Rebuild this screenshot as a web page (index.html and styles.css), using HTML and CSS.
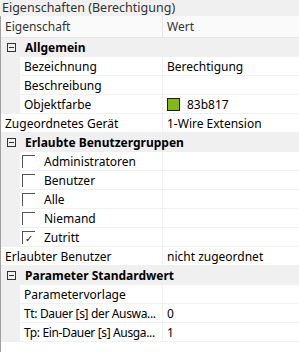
FILE: index.html
```html
<!DOCTYPE html>
<html lang="de">
<head>
    <meta charset="UTF-8">
    <title>Eigenschaften</title>
    <link rel="stylesheet" href="styles.css">
</head>
<body>

    <div class="panel">
        <div class="title">Eigenschaften (Berechtigung)</div>
        <div class="grid">
            <div class="head">
                <div class="name">Eigenschaft</div>
                <div class="value">Wert</div>
            </div>

            <div class="row category">
                <span class="toggle"></span>
                <span class="label">Allgemein</span>
            </div>
            <div class="row child">
                <div class="name">Bezeichnung</div>
                <div class="value">Berechtigung</div>
            </div>
            <div class="row child">
                <div class="name">Beschreibung</div>
                <div class="value"></div>
            </div>
            <div class="row child">
                <div class="name">Objektfarbe</div>
                <div class="value"><span class="swatch"></span>83b817</div>
            </div>
            <div class="row top">
                <div class="name">Zugeordnetes Gerät</div>
                <div class="value">1-Wire Extension</div>
            </div>

            <div class="row category">
                <span class="toggle"></span>
                <span class="label">Erlaubte Benutzergruppen</span>
            </div>
            <div class="row child">
                <div class="name"><span class="check"></span>Administratoren</div>
                <div class="value"></div>
            </div>
            <div class="row child">
                <div class="name"><span class="check"></span>Benutzer</div>
                <div class="value"></div>
            </div>
            <div class="row child">
                <div class="name"><span class="check"></span>Alle</div>
                <div class="value"></div>
            </div>
            <div class="row child">
                <div class="name"><span class="check"></span>Niemand</div>
                <div class="value"></div>
            </div>
            <div class="row child">
                <div class="name"><span class="check checked">&#10003;</span>Zutritt</div>
                <div class="value"></div>
            </div>
            <div class="row top">
                <div class="name">Erlaubter Benutzer</div>
                <div class="value">nicht zugeordnet</div>
            </div>

            <div class="row category">
                <span class="toggle"></span>
                <span class="label">Parameter Standardwert</span>
            </div>
            <div class="row child">
                <div class="name">Parametervorlage</div>
                <div class="value"></div>
            </div>
            <div class="row child">
                <div class="name long">Tt: Dauer [s] der Auswa...</div>
                <div class="value">0</div>
            </div>
            <div class="row child">
                <div class="name long">Tp: Ein-Dauer [s] Ausga...</div>
                <div class="value">1</div>
            </div>
        </div>
    </div>

</body>
</html>
```

FILE: styles.css
```css
body {
    margin: 0;
    width: 299px;
    height: 352px;
    overflow: hidden;
    background-color: #ffffff;
    font-family: "Noto Sans", "Open Sans", sans-serif;
    font-size: 12px;
    color: #000;
}

.panel {
    height: 352px;
    display: flex;
    flex-direction: column;
}

.title {
    height: 16px;
    line-height: 15px;
    padding-left: 2px;
    background-color: #f0f0f0;
    color: #333;
    font-size: 12.5px;
    white-space: nowrap;
}

.grid {
    flex: 1;
    border-left: 1px solid #a0a0a0;
    background-color: #fff;
}

.head {
    display: flex;
    height: 21px;
    line-height: 21px;
    background-color: #fafafa;
    border-bottom: 1px solid #e5e5e5;
    color: #333;
}

.head .name {
    width: 157px;
    padding-left: 4px;
    border-right: 1px solid #e5e5e5;
}

.head .value {
    padding-left: 4px;
}

.row {
    display: flex;
    align-items: center;
    height: 18px;
    border-bottom: 1px solid #f0f0f0;
    white-space: nowrap;
}

.row .name {
    display: flex;
    align-items: center;
    height: 18px;
    border-right: 1px solid #f0f0f0;
}

.row .name.long {
    letter-spacing: -0.35px;
}

.row .value {
    display: flex;
    align-items: center;
    padding-left: 4px;
}

.category {
    background-color: #f0f0f0;
    font-weight: bold;
}

.toggle {
    position: relative;
    width: 7px;
    height: 7px;
    margin-left: 6px;
    margin-right: 9px;
    border: 1px solid #333;
}

.toggle::after {
    content: "";
    position: absolute;
    left: 1px;
    top: 3px;
    width: 5px;
    height: 1px;
    background-color: #333;
}

.child {
    background-color: #f0f0f0;
}

.child .name {
    margin-left: 19px;
    width: 138px;
    padding-left: 4px;
    background-color: #fff;
}

.child .value {
    flex: 1;
    height: 18px;
    background-color: #fff;
}

.top .name {
    width: 157px;
    padding-left: 4px;
}

.check {
    width: 12px;
    height: 12px;
    margin-left: -2px;
    margin-right: 9px;
    border-top: 1px solid #555;
    border-left: 1px solid #555;
    font-size: 10px;
    line-height: 12px;
    text-align: center;
    color: #222;
}

.swatch {
    width: 11px;
    height: 11px;
    margin-right: 7px;
    background-color: #83b817;
    border: 1px solid #1a1a1a;
}
```
